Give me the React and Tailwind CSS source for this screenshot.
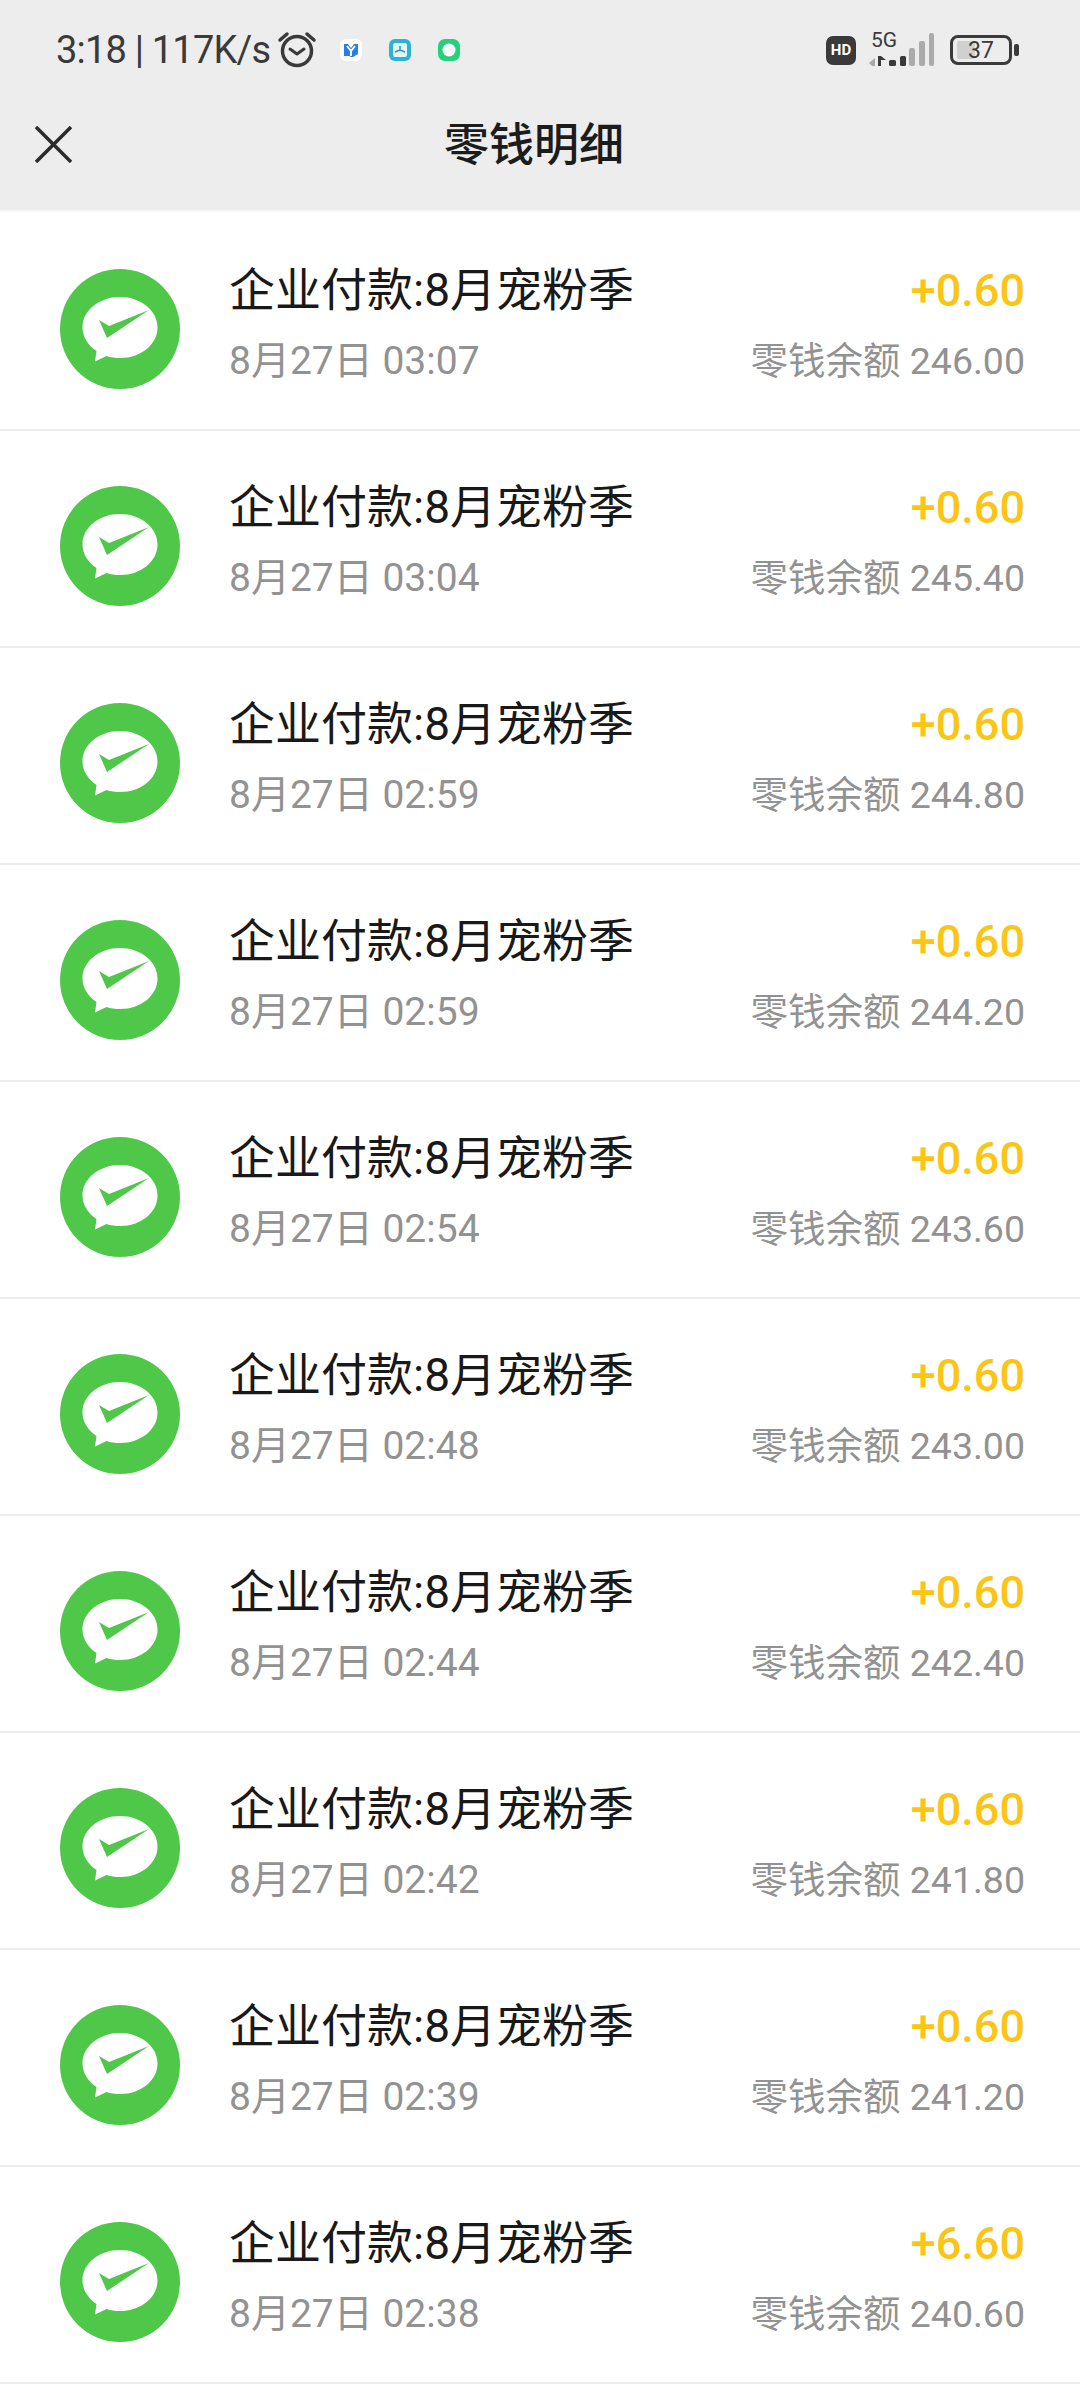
const rows = [
  ["03:07", "+0.60", "246.00"],
  ["03:04", "+0.60", "245.40"],
  ["02:59", "+0.60", "244.80"],
  ["02:59", "+0.60", "244.20"],
  ["02:54", "+0.60", "243.60"],
  ["02:48", "+0.60", "243.00"],
  ["02:44", "+0.60", "242.40"],
  ["02:42", "+0.60", "241.80"],
  ["02:39", "+0.60", "241.20"],
  ["02:38", "+6.60", "240.60"],
];

const cjk = "font-['Roboto','Noto_Sans_CJK_SC',sans-serif]";

function PayIcon() {
  return (
    <svg width="120" height="120" viewBox="0 0 120 120" className="shrink-0 mt-[2px]">
      <circle cx="60" cy="60" r="60" fill="#4fc84a" />
      <path d="M60 28c21 0 37.500 13.500 37.500 30.500S81 89 60 89c-5 0-9-.6-13.500-2L35 92.500l1.500-10.500C28 76 22.500 68 22.500 58.500 22.500 41.500 39 28 60 28z" fill="#fff" />
      <path d="M39 51l10 6 40-16-42 28z" fill="#4fc84a" />
    </svg>
  );
}

function Row({ time, amount, balance }) {
  return (
    <div className="h-[217px] flex items-center pt-[12px] pl-[60px] pr-[55px] border-b-2 border-[#ececec]">
      <PayIcon />
      <div className="ml-[49px] flex-1 flex flex-col gap-[14px] -mt-[6px]">
        <div className="flex items-center justify-between h-[58px]">
          <span className="text-[46px] leading-[58px] text-[#191919]">企业付款:8月宠粉季</span>
          <span className="text-[45px] leading-[58px] mt-[3px] font-medium text-[#fac515]">{amount}</span>
        </div>
        <div className="flex items-center justify-between h-[56px] text-[#929292]">
          <span className="text-[39px] leading-[56px]">8月27日 {time}</span>
          <span className="text-[37.500px] leading-[56px]">零钱余额 {balance}</span>
        </div>
      </div>
    </div>
  );
}

function StatusIcons() {
  return (
    <>
      <svg width="42" height="40" viewBox="0 0 42 40" className="ml-[6px]" fill="none" stroke="#3a3a3a">
        <circle cx="21" cy="21" r="14.500" strokeWidth="3.500" />
        <path d="M14 19l7 5 7-5" strokeWidth="3" strokeLinecap="round" strokeLinejoin="round" />
        <path d="M4 10l7-6M38 10l-7-6" strokeWidth="3.500" strokeLinecap="round" />
      </svg>
      <svg width="22" height="22" viewBox="0 0 22 22" className="ml-[22px]">
        <rect width="22" height="22" rx="6" fill="#fff" />
        <path d="M4 5h4l3 4 3-4h4v10l-5 3-2 0-2-1-5 0z" fill="#2a7fe0" />
        <path d="M7 7l4 5 4-5M11 12v5" stroke="#fff" strokeWidth="2" fill="none" />
      </svg>
      <svg width="22" height="22" viewBox="0 0 22 22" className="ml-[27px]">
        <rect width="22" height="22" rx="6" fill="#2bb3d6" />
        <rect x="4" y="4" width="14" height="14" rx="2" fill="#e4f5f9" />
        <path d="M6 13l5-2 5 2M11 7v4" stroke="#2b8fb0" strokeWidth="1.400" fill="none" />
      </svg>
      <svg width="22" height="22" viewBox="0 0 22 22" className="ml-[27px]">
        <rect width="22" height="22" rx="7" fill="#25d07f" />
        <circle cx="11" cy="11" r="6.500" fill="#fff" />
      </svg>
    </>
  );
}

function RightIcons() {
  return (
    <div className="flex items-center">
      <div className="w-[30px] h-[29px] rounded-[7px] bg-[#3a3a3a] text-white text-[15px] font-bold font-['Roboto',sans-serif] flex items-center justify-center leading-none">HD</div>
      <div className="relative w-[66px] h-[36px] ml-[13px]">
        <span className="absolute left-[2px] -top-[3px] text-[21px] leading-[22px] text-[#3a3a3a] font-['Roboto',sans-serif]">5G</span>
        <svg width="66" height="36" viewBox="0 0 66 36" className="absolute left-0 top-0">
          <path d="M0 31l6-5v8H3z" fill="#a8a8a8" />
          <path d="M9 24h3v10H9zM12 24l5 4h-5z" fill="#3a3a3a" />
          <rect x="20" y="28" width="7" height="6" rx="1.500" fill="#3a3a3a" />
          <rect x="31" y="24" width="6" height="10" rx="1.500" fill="#3a3a3a" />
          <rect x="40" y="16" width="6" height="18" rx="2" fill="#ababab" />
          <rect x="50" y="9" width="6" height="25" rx="2" fill="#ababab" />
          <rect x="60" y="1" width="5" height="33" rx="2" fill="#ababab" />
        </svg>
      </div>
      <div className="ml-[15px] relative w-[62px] h-[30px] rounded-[8px] border-[3px] border-[#3a3a3a] overflow-hidden flex items-center justify-center">
        <div className="absolute left-[4px] top-[3px] bottom-[3px] w-[18px] bg-[#d0d0d0] rounded-[2px]" />
        <span className="relative text-[23px] leading-none text-[#3a3a3a] font-['Roboto',sans-serif]">37</span>
      </div>
      <div className="w-[5px] h-[12px] ml-[2px] rounded-[2px] bg-[#3a3a3a]" />
    </div>
  );
}

export default function App() {
  return (
    <div className={`w-[1080px] h-[2400px] overflow-hidden bg-white ${cjk}`}>
      <div className="h-[212px] mb-[2px] bg-[#ededed] border-b-2 border-[#f5f5f5]">
        <div className="h-[100px] flex items-center justify-between pl-[56px] pr-[61px]">
          <div className="flex items-center">
            <span className="text-[38px] leading-[50px] tracking-[-0.8px] text-[#3a3a3a] font-['Roboto',sans-serif]">3:18 | 117K/s</span>
            <StatusIcons />
          </div>
          <RightIcons />
        </div>
        <div className="h-[90px] flex items-center justify-center relative pr-[12px]">
          <svg width="37" height="37" viewBox="0 0 37 37" className="absolute left-[35px] top-[26px]" stroke="#2b2b2b" strokeWidth="3.500" fill="none">
            <path d="M1 1l35 35M36 1L1 36" />
          </svg>
          <span className="text-[45px] leading-[60px] mt-[2px] font-medium text-[#1c1c1c]">零钱明细</span>
        </div>
      </div>
      {rows.map((r, i) => (
        <Row key={i} time={r[0]} amount={r[1]} balance={r[2]} />
      ))}
    </div>
  );
}
